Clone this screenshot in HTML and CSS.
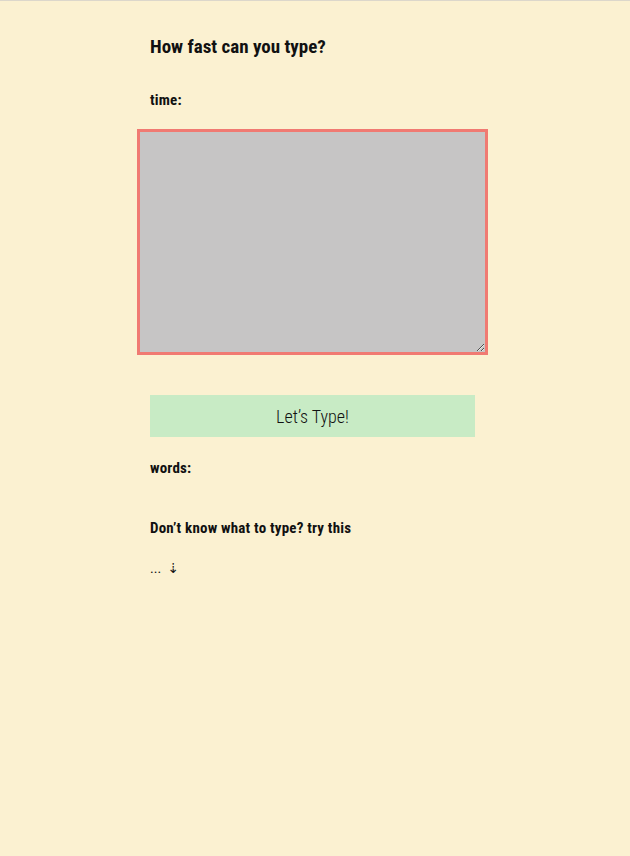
FILE: index.html
```html
<!DOCTYPE html>
<html>
<head>
<meta charset="utf-8">
<link rel="stylesheet" href="styles.css">
</head>
<body>
<div class="topline"></div>
<main class="wrap">
  <h1 class="title">How fast can you type?</h1>
  <p class="label time">time:</p>
  <textarea class="input"></textarea>
  <button class="go">Let’s Type!</button>
  <p class="label words">words:</p>
  <p class="label hint">Don’t know what to type? try this</p>
  <p class="more">... &nbsp;<span class="arrow">⇣</span></p>
</main>
</body>
</html>
```
FILE: styles.css
```css
html, body {
  margin: 0;
  padding: 0;
  background: #fbf1d1;
  height: 100%;
}
body {
  font-family: "Liberation Sans Narrow", "Roboto Condensed", "DejaVu Sans", sans-serif;
  color: #111;
}
.topline {
  height: 1px;
  background: #dcd7cb;
}
.wrap {
  width: 330px;
  margin: 0 auto;
  padding-top: 35px;
  display: flex;
  flex-direction: column;
  align-items: flex-start;
}
.title {
  margin: 0;
  font-size: 19px;
  font-weight: bold;
  line-height: 22px;
}
.label {
  margin: 0;
  font-size: 15px;
  font-weight: bold;
  line-height: 18px;
  letter-spacing: 0.2px;
}
.time {
  margin-top: 33px;
}
.input {
  box-sizing: border-box;
  margin: 20px 0 0 -13px;
  width: 351px;
  height: 226px;
  border: 3px solid #f07a72;
  background: #c6c5c5;
  padding: 0;
  outline: none;
  resize: both;
}
.go {
  margin-top: 40px;
  width: 325px;
  height: 42px;
  border: none;
  background: #c8ebc5;
  font-family: inherit;
  font-size: 18px;
  font-weight: 300;
  color: #111;
  padding: 0;
}
.words {
  margin-top: 22px;
}
.hint {
  margin-top: 42px;
}
.more {
  margin: 22px 0 0;
  font-size: 14px;
  line-height: 18px;
}
.arrow {
  color: #111;
}
```
